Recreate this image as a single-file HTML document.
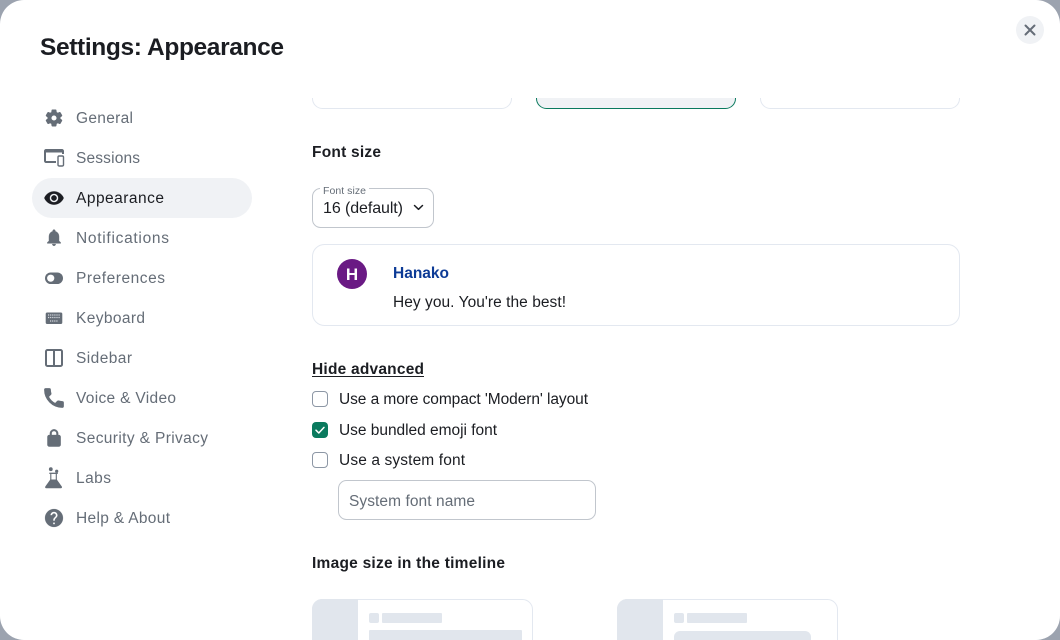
<!DOCTYPE html>
<html lang="en">
<head>
<meta charset="utf-8">
<title>Settings: Appearance</title>
<style>
html,body{margin:0;padding:0;width:1060px;height:640px;overflow:hidden;background:#9ca3af}
svg{display:block;overflow:hidden}
text{font-family:"Liberation Sans",sans-serif;font-size:15.5px;fill:#1b1d22}
.n{fill:#656d77}
.b{font-weight:700}
</style>
</head>
<body>
<svg width="1060" height="640" viewBox="0 0 1060 640" xmlns="http://www.w3.org/2000/svg">
<rect width="1060" height="640" fill="#9ca3af"/>
<rect x="0" y="0" width="1060" height="640" rx="24" fill="#fff"/>

<text x="40" y="55" class="b" style="font-size:24.5px" textLength="244" lengthAdjust="spacing">Settings: Appearance</text>

<circle cx="1030" cy="30" r="14" fill="#f0f2f5"/>
<path d="M1025.5 25.5l9 9M1034.5 25.5l-9 9" stroke="#656d77" stroke-width="2" stroke-linecap="round" fill="none"/>

<!-- nav -->
<rect x="32" y="178" width="220" height="40" rx="20" fill="#f0f2f5"/>
<text x="76" y="123" class="n" textLength="57">General</text>
<text x="76" y="163" class="n" textLength="64">Sessions</text>
<text x="76" y="203" textLength="88">Appearance</text>
<text x="76" y="243" class="n" textLength="93">Notifications</text>
<text x="76" y="283" class="n" textLength="89">Preferences</text>
<text x="76" y="323" class="n" textLength="69">Keyboard</text>
<text x="76" y="363" class="n" textLength="56">Sidebar</text>
<text x="76" y="403" class="n" textLength="100">Voice &amp; Video</text>
<text x="76" y="443" class="n" textLength="132">Security &amp; Privacy</text>
<text x="76" y="483" class="n" textLength="35">Labs</text>
<text x="76" y="523" class="n" textLength="94">Help &amp; About</text>

<!-- icons -->
<g fill="#656d77">
<!-- gear -->
<path stroke="#656d77" stroke-width="1.100" transform="translate(44 108) scale(.833)" d="M19.14 12.94c.04-.3.06-.61.06-.94 0-.32-.02-.64-.07-.94l2.03-1.58c.18-.14.23-.41.12-.61l-1.92-3.32c-.12-.22-.37-.29-.59-.22l-2.39.96c-.5-.38-1.03-.7-1.62-.94l-.36-2.54c-.04-.24-.24-.41-.48-.41h-3.84c-.24 0-.43.17-.47.41l-.36 2.54c-.59.24-1.13.57-1.62.94l-2.39-.96c-.22-.08-.47 0-.59.22L2.74 8.87c-.12.21-.08.47.12.61l2.03 1.58c-.05.3-.09.63-.09.94s.02.64.07.94l-2.03 1.58c-.18.14-.23.41-.12.61l1.92 3.32c.12.22.37.29.59.22l2.39-.96c.5.38 1.03.7 1.62.94l.36 2.54c.05.24.24.41.48.41h3.84c.24 0 .44-.17.47-.41l.36-2.54c.59-.24 1.13-.56 1.62-.94l2.39.96c.22.08.47 0 .59-.22l1.92-3.32c.12-.22.07-.47-.12-.61l-2.01-1.58zM12 15.6c-1.98 0-3.6-1.62-3.6-3.6s1.62-3.6 3.6-3.6 3.6 1.62 3.6 3.6-1.62 3.6-3.6 3.6z"/>
<!-- sessions -->
<path d="M46 149h16c1 0 2 .9 2 2v3h-2v-1.5H46V161h10v2H46c-1.100 0-2-.9-2-2v-10c0-1.100.9-2 2-2z"/>
<rect x="58" y="156" width="5.500" height="10" rx="1.200" fill="none" stroke="#656d77" stroke-width="1.400"/>
<!-- eye -->
<path fill="#1b1d22" stroke="#1b1d22" stroke-width=".4" transform="translate(43.500 187.500) scale(.875)" d="M12 4.500C7 4.500 2.730 7.610 1 12c1.730 4.390 6 7.500 11 7.500s9.270-3.110 11-7.500c-1.730-4.390-6-7.500-11-7.500zM12 17c-2.760 0-5-2.240-5-5s2.240-5 5-5 5 2.240 5 5-2.240 5-5 5zm0-8c-1.660 0-3 1.340-3 3s1.340 3 3 3 3-1.340 3-3-1.340-3-3-3z"/>
<!-- bell -->
<path stroke="#656d77" stroke-width=".5" transform="translate(44 227.500) scale(.833)" d="M12 22c1.100 0 2-.9 2-2h-4c0 1.100.89 2 2 2zm6-6v-5c0-3.070-1.640-5.640-4.500-6.320V4c0-.83-.67-1.500-1.500-1.500s-1.500.67-1.500 1.500v.68C7.630 5.360 6 7.920 6 11v5l-2 2v1h16v-1l-2-2z"/>
<!-- toggle -->
<rect x="45" y="272.500" width="18" height="11.500" rx="5.750"/>
<circle cx="50.700" cy="278.200" r="3.600" fill="#fff"/>
<!-- keyboard -->
<rect x="45.700" y="312.500" width="16.600" height="11.500" rx="1.500"/>
<path d="M48 315h12M48 317.500h12M50 321h8" stroke="#d6dae0" stroke-width="1.200" stroke-dasharray="1.200 .9" fill="none"/>
<!-- sidebar -->
<rect x="46" y="350" width="16" height="16" rx="1.500" fill="none" stroke="#656d77" stroke-width="2"/>
<rect x="53" y="350" width="2" height="16"/>
<!-- phone -->
<path stroke="#656d77" stroke-width="1" stroke-linejoin="round" transform="translate(41.500 385.500) scale(1.040)" d="M6.620 10.790c1.440 2.830 3.760 5.140 6.590 6.590l2.200-2.200c.27-.27.67-.36 1.020-.24 1.120.37 2.330.57 3.570.57.55 0 1 .45 1 1V20c0 .55-.45 1-1 1-9.390 0-17-7.610-17-17 0-.55.45-1 1-1h3.500c.55 0 1 .45 1 1 0 1.250.2 2.450.57 3.570.11.35.03.74-.25 1.020l-2.200 2.200z"/>
<!-- lock -->
<path fill-rule="evenodd" stroke="#656d77" stroke-width=".5" transform="translate(44.200 428.500) scale(.82)" d="M18 8h-1V6c0-2.760-2.240-5-5-5S7 3.240 7 6v2H6c-1.100 0-2 .9-2 2v10c0 1.100.9 2 2 2h12c1.100 0 2-.9 2-2V10c0-1.100-.9-2-2-2zM9 8V6c0-1.660 1.340-3 3-3s3 1.340 3 3v2H9z"/>
<!-- labs -->
<circle cx="50.800" cy="469.200" r="1.900"/>
<circle cx="56.700" cy="471.200" r="1.600"/>
<path d="M49.300 473.300h8.500" stroke="#656d77" stroke-width="1.300" fill="none"/>
<path d="M50.800 473.500v6.500M56.300 473.500v6.500" stroke="#656d77" stroke-width="1.100" fill="none"/>
<path d="M50.300 479.500h6.500l5 7c.5.800 0 1.800-1 1.800H46.300c-1 0-1.500-1-1-1.800z"/>
<!-- help -->
<path stroke="#656d77" stroke-width=".2" transform="translate(43.200 507.200) scale(.9)" d="M12 2C6.480 2 2 6.480 2 12s4.480 10 10 10 10-4.480 10-10S17.520 2 12 2zm1 17h-2v-2h2v2zm2.070-7.750l-.9.92C13.450 12.900 13 13.500 13 15h-2v-.5c0-1.100.45-2.100 1.170-2.830l1.240-1.260c.37-.36.59-.86.59-1.410 0-1.100-.9-2-2-2s-2 .9-2 2H8c0-2.210 1.790-4 4-4s4 1.790 4 4c0 .88-.36 1.680-.93 2.250z"/>
</g>

<!-- theme cards clipped -->
<clipPath id="c1"><rect x="300" y="98" width="680" height="20"/></clipPath>
<g clip-path="url(#c1)">
<rect x="312.500" y="60.500" width="199" height="48" rx="10" fill="#fff" stroke="#e3e8f0"/>
<rect x="536.500" y="60.500" width="199" height="48" rx="10" fill="#f0f2f5" stroke="#0a7a5e"/>
<rect x="760.500" y="60.500" width="199" height="48" rx="10" fill="#fff" stroke="#e3e8f0"/>
</g>

<text x="312" y="157" class="b" textLength="69">Font size</text>

<!-- select -->
<rect x="312.500" y="188.500" width="121" height="39" rx="8" fill="#fff" stroke="#c1c6cd"/>
<rect x="320" y="186" width="49" height="5" fill="#fff"/>
<text x="323" y="194" class="n" style="font-size:10.500px" textLength="43">Font size</text>
<text x="323" y="213" textLength="80" style="font-size:16px">16 (default)</text>
<path d="M414.500 205.500l4 3.800 4-3.800" fill="none" stroke="#1b1d22" stroke-width="1.500" stroke-linecap="round" stroke-linejoin="round"/>

<!-- preview -->
<rect x="312.500" y="244.500" width="647" height="81" rx="12" fill="#fff" stroke="#e3e8f0"/>
<circle cx="352" cy="274" r="15" fill="#6a1a84"/>
<text x="352" y="280" class="b" text-anchor="middle" style="font-size:17px;fill:#fff">H</text>
<text x="393" y="278" class="b" style="fill:#0d3b96" textLength="56">Hanako</text>
<text x="393" y="307" textLength="173">Hey you. You're the best!</text>

<text x="312" y="374" class="b" textLength="112">Hide advanced</text>
<rect x="312" y="376" width="112" height="1" fill="#1b1d22"/>

<!-- checkboxes -->
<rect x="312.500" y="391.500" width="15" height="15" rx="3.500" fill="#fff" stroke="#8d97a5"/>
<text x="339" y="404" textLength="249">Use a more compact 'Modern' layout</text>
<rect x="312" y="422" width="16" height="16" rx="4" fill="#0a7a5e"/>
<path d="M316 430.200l2.800 2.800 5.200-5.600" fill="none" stroke="#fff" stroke-width="1.500" stroke-linecap="round" stroke-linejoin="round"/>
<text x="339" y="435" textLength="158">Use bundled emoji font</text>
<rect x="312.500" y="452.500" width="15" height="15" rx="3.500" fill="#fff" stroke="#8d97a5"/>
<text x="339" y="465" textLength="126">Use a system font</text>

<!-- input -->
<rect x="338.500" y="480.500" width="257" height="39" rx="8" fill="#fff" stroke="#c1c6cd"/>
<text x="349" y="506" class="n" textLength="126">System font name</text>

<text x="312" y="568" class="b" textLength="193">Image size in the timeline</text>

<!-- image size cards -->
<path d="M312.500 640V609.500a10 10 0 0 1 10-10h200a10 10 0 0 1 10 10V640" fill="#fff" stroke="#e3e8f0"/>
<path d="M322 599h36v41h-46v-31c0-5.500 4.500-10 10-10z" fill="#e1e6ed"/>
<rect x="369" y="613" width="10" height="10" rx="2" fill="#e1e6ed"/>
<rect x="382" y="613" width="60" height="10" rx="1" fill="#e1e6ed"/>
<path d="M370 630h151a1 1 0 0 1 1 1v9H369v-9a1 1 0 0 1 1-1z" fill="#e1e6ed"/>

<path d="M617.500 640V609.500a10 10 0 0 1 10-10h200a10 10 0 0 1 10 10V640" fill="#fff" stroke="#e3e8f0"/>
<path d="M627 599h36v41h-46v-31c0-5.500 4.500-10 10-10z" fill="#e1e6ed"/>
<rect x="674" y="613" width="10" height="10" rx="2" fill="#e1e6ed"/>
<rect x="687" y="613" width="60" height="10" rx="1" fill="#e1e6ed"/>
<path d="M680 631h125a6 6 0 0 1 6 6v3H674v-3a6 6 0 0 1 6-6z" fill="#e1e6ed"/>
</svg>
</body>
</html>
